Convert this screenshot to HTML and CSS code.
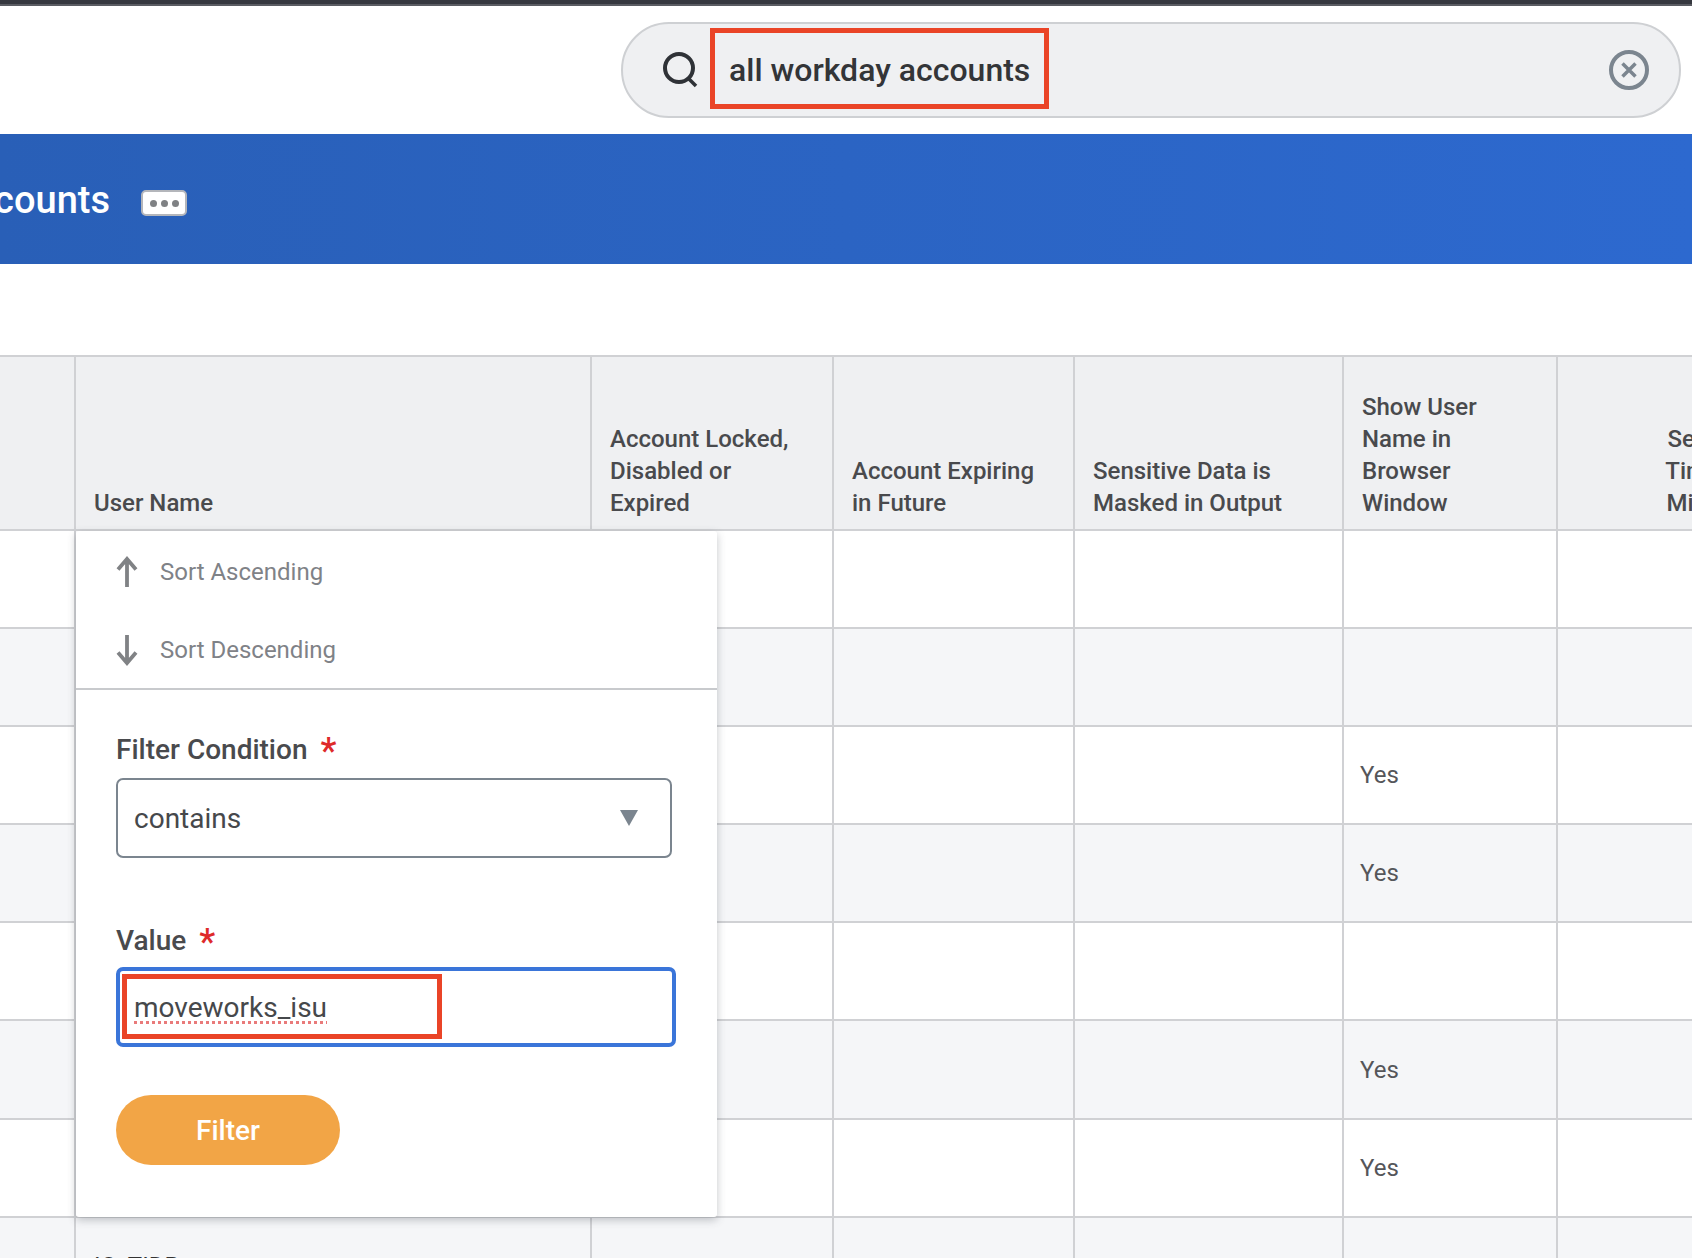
FILE: index.html
```html
<!DOCTYPE html>
<html lang="en">
<head>
    <meta charset="UTF-8">
    <title>All Workday Accounts</title>
    <link rel="stylesheet" href="styles.css">
</head>
<body>
    <div class="top-strip"></div>
    <header class="search-bar">
        <div class="search-box">
            <svg class="search-icon" viewBox="0 0 36 36" width="36" height="36">
                <circle cx="17" cy="16" r="14" fill="none" stroke="#2f3237" stroke-width="4"/>
                <path d="M27 27l7 7" fill="none" stroke="#2f3237" stroke-width="3.6"/>
            </svg>
            <div class="search-term"><span>all workday accounts</span></div>
            <svg class="clear-icon" viewBox="0 0 42 42" width="42" height="42">
                <circle cx="21" cy="21" r="18" fill="none" stroke="#7b858f" stroke-width="4"/>
                <path d="M14.5 14.5l13 13M27.5 14.5l-13 13" fill="none" stroke="#7b858f" stroke-width="3.5"/>
            </svg>
        </div>
    </header>
    <section class="banner">
        <h1 class="banner-title">All Workday Accounts</h1>
        <button class="more-btn"><i></i><i></i><i></i></button>
    </section>
    <div class="table-wrap">
        <table class="accounts">
            <colgroup>
                <col class="c0"><col class="c1"><col class="c2"><col class="c3"><col class="c4"><col class="c5"><col class="c6">
            </colgroup>
            <thead>
                <tr>
                    <th></th>
                    <th>User Name</th>
                    <th>Account Locked,<br>Disabled or<br>Expired</th>
                    <th>Account Expiring<br>in Future</th>
                    <th>Sensitive Data is<br>Masked in Output</th>
                    <th>Show User<br>Name in<br>Browser<br>Window</th>
                    <th class="center">Session<br>Timeout<br>Minutes</th>
                </tr>
            </thead>
            <tbody>
                <tr><td></td><td></td><td></td><td></td><td></td><td></td><td></td></tr>
                <tr><td></td><td></td><td></td><td></td><td></td><td></td><td></td></tr>
                <tr><td></td><td></td><td></td><td></td><td></td><td>Yes</td><td></td></tr>
                <tr><td></td><td></td><td></td><td></td><td></td><td>Yes</td><td></td></tr>
                <tr><td></td><td></td><td></td><td></td><td></td><td></td><td></td></tr>
                <tr><td></td><td></td><td></td><td></td><td></td><td>Yes</td><td></td></tr>
                <tr><td></td><td></td><td></td><td></td><td></td><td>Yes</td><td></td></tr>
                <tr><td></td><td class="top-cell">IO_TIDB</td><td></td><td></td><td></td><td></td><td></td></tr>
            </tbody>
        </table>

        <div class="filter-popup">
            <div class="sort-list">
                <div class="sort-item">
                    <svg viewBox="0 0 24 32" width="24" height="32"><path d="M12 31V3M3 13.5L12 3l9 10.5" fill="none" stroke="#808285" stroke-width="3.8"/></svg>
                    <span>Sort Ascending</span>
                </div>
                <div class="sort-item">
                    <svg viewBox="0 0 24 32" width="24" height="32"><path d="M12 1v28M3 18.5L12 29l9-10.5" fill="none" stroke="#808285" stroke-width="3.8"/></svg>
                    <span>Sort Descending</span>
                </div>
            </div>
            <form class="filter-form">
                <label class="field-label">Filter Condition <b>*</b></label>
                <div class="select-box">
                    <span>contains</span>
                    <svg viewBox="0 0 18 16" width="18" height="16"><path d="M0 0h18L9 16z" fill="#7b858f"/></svg>
                </div>
                <label class="field-label value-label">Value <b>*</b></label>
                <div class="value-box">
                    <div class="value-mark"><span>moveworks_isu</span></div>
                </div>
                <button type="button" class="filter-btn">Filter</button>
            </form>
        </div>
    </div>
</body>
</html>
```

FILE: styles.css
```css
* {
    box-sizing: border-box;
}

html, body {
    height: 1258px;
    overflow: hidden;
}

body {
    margin: 0;
    background: #fff;
    color: #494a4d;
    font-family: Roboto, "Liberation Sans", sans-serif;
}

.top-strip {
    height: 6px;
    background: #36383f;
    border-bottom: 2px solid #5a5c62;
}

.search-bar {
    display: flex;
    justify-content: flex-end;
    height: 128px;
    padding: 16px 11px 0 0;
}

.search-box {
    display: flex;
    align-items: center;
    width: 1060px;
    height: 96px;
    padding: 0 29px 0 39px;
    background: #eff0f2;
    border: 2px solid #ced0d3;
    border-radius: 48px;
}

.search-icon {
    flex: none;
}

.search-term {
    display: flex;
    align-items: center;
    width: 339px;
    height: 81px;
    margin: -3px 0 0 12px;
    padding: 3px 0 0 14px;
    border: 5px solid #ea4427;
    color: #333538;
    font-size: 32px;
    font-weight: 500;
    white-space: nowrap;
}

.clear-icon {
    flex: none;
    margin-left: auto;
}

.banner {
    display: flex;
    align-items: center;
    justify-content: flex-start;
    height: 130px;
    background: linear-gradient(to right, #295fb7, #2d69cf);
    overflow: hidden;
}

.banner-title {
    flex: none;
    width: 110px;
    margin: 2px 31px 0 0;
    color: #fff;
    direction: rtl;
    font-size: 38px;
    font-weight: 500;
    white-space: nowrap;
    overflow: hidden;
}

.more-btn {
    display: flex;
    align-items: center;
    justify-content: center;
    gap: 4px;
    width: 46px;
    height: 26px;
    margin-top: 8px;
    padding: 0;
    background: #fff;
    border: 2px solid #b4b6bb;
    border-radius: 5px;
}

.more-btn i {
    width: 7px;
    height: 7px;
    background: #7f8184;
    border-radius: 50%;
}

.table-wrap {
    position: relative;
    height: 994px;
    padding-top: 91px;
    overflow: hidden;
}

.accounts {
    width: 1863px;
    table-layout: fixed;
    border-collapse: collapse;
    font-size: 24px;
}

.c0 { width: 75px; }
.c1 { width: 516px; }
.c2 { width: 242px; }
.c3 { width: 241px; }
.c4 { width: 269px; }
.c5 { width: 214px; }
.c6 { width: 306px; }

.accounts th {
    height: 174px;
    padding: 0 10px 10px 18px;
    background: #eff0f2;
    border: 2px solid #d0d1d4;
    font-weight: 500;
    line-height: 32px;
    text-align: left;
    vertical-align: bottom;
}

.accounts th:first-child,
.accounts td:first-child {
    border-left: 0;
}

.accounts th.center {
    padding: 0 0 10px;
    text-align: center;
}

.accounts td {
    height: 98px;
    padding: 0 16px;
    border: 2px solid #d0d1d4;
    color: #55565a;
    font-size: 24px;
}

.accounts tbody tr:nth-child(6) td {
    height: 99px;
}

.accounts tbody tr:nth-child(even) td {
    background: #f5f6f8;
}

.accounts td.top-cell {
    padding: 34px 16px 0 18px;
    color: #333;
    vertical-align: top;
}

.filter-popup {
    position: absolute;
    top: 267px;
    left: 76px;
    width: 641px;
    height: 686px;
    background: #fff;
    border-radius: 3px;
    box-shadow: 0 3px 8px rgba(60, 65, 75, 0.3);
}

.sort-list {
    height: 159px;
    padding-top: 2px;
    border-bottom: 2px solid #c8cacd;
}

.sort-item {
    display: flex;
    align-items: center;
    gap: 21px;
    height: 78px;
    padding-left: 39px;
    color: #7f8287;
    font-size: 24px;
}

.filter-form {
    display: flex;
    flex-direction: column;
    align-items: flex-start;
    padding: 42px 40px 0;
}

.field-label {
    height: 36px;
    margin-bottom: 10px;
    color: #494a4d;
    font-size: 28px;
    font-weight: 500;
    line-height: 36px;
}

.field-label b {
    margin-left: 6px;
    color: #de2a2a;
    font-size: 36px;
    font-weight: 500;
    line-height: 1;
    vertical-align: -4px;
}

.value-label {
    margin: 65px 0 8px;
}

.select-box {
    display: flex;
    align-items: center;
    justify-content: space-between;
    width: 556px;
    height: 80px;
    padding: 0 32px 0 16px;
    border: 2px solid #7b858f;
    border-radius: 7px;
    color: #46484b;
    font-size: 28px;
}

.value-box {
    width: 560px;
    height: 80px;
    padding: 3px 4px 3px 2px;
    border: 4px solid #3a75d9;
    border-radius: 7px;
}

.value-mark {
    display: flex;
    align-items: center;
    width: 320px;
    height: 65px;
    padding: 2px 0 0 7px;
    border: 5px solid #ea4427;
    color: #46484b;
    font-size: 28px;
}

.value-mark span {
    text-decoration: underline dotted #e97a7a 3px;
    text-underline-offset: 4px;
}

.filter-btn {
    width: 224px;
    height: 70px;
    margin-top: 48px;
    background: #f2a546;
    border: 0;
    border-radius: 35px;
    color: #fff;
    font-family: inherit;
    font-size: 28px;
    font-weight: 500;
}
```
